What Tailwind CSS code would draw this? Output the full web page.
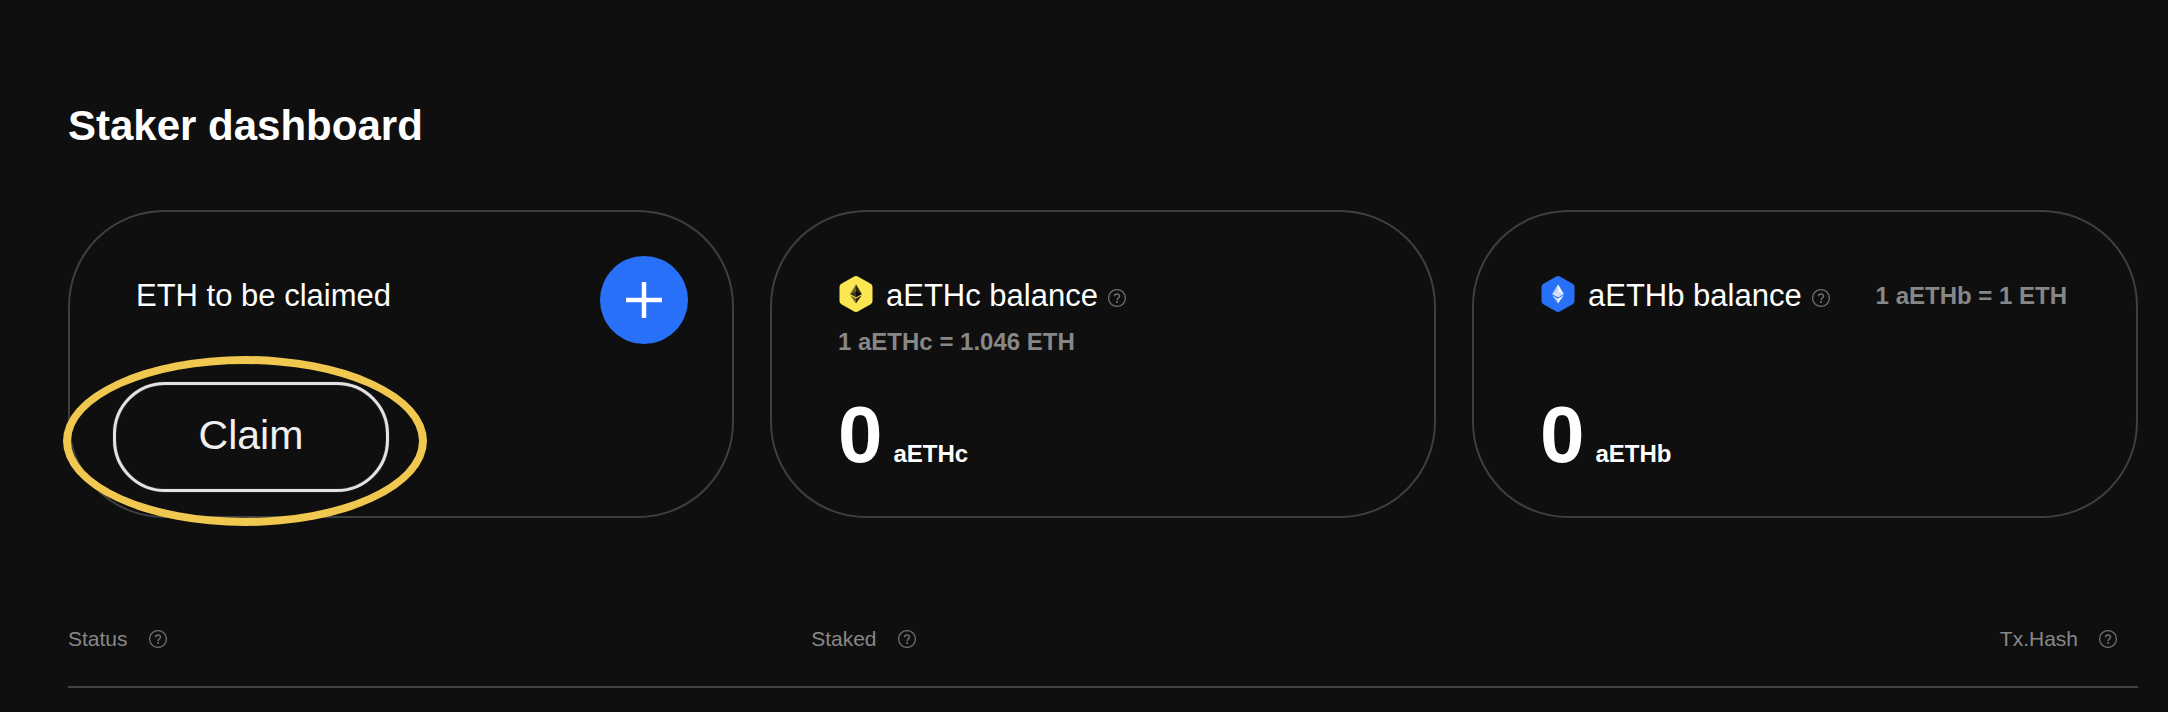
<!DOCTYPE html>
<html lang="en">
<head>
<meta charset="utf-8">
<meta name="viewport" content="width=device-width, initial-scale=1">
<title>Staker dashboard</title>
<script src="https://cdn.jsdelivr.net/npm/@tailwindcss/browser@4"></script>
</head>
<body class="min-h-screen bg-[#0f0f0f] font-['Liberation_Sans',Arial,sans-serif] text-white antialiased">
<svg class="hidden" aria-hidden="true">
  <symbol id="help" viewBox="0 0 18 18">
    <circle cx="9" cy="9" r="8.4" fill="none" stroke="currentColor" stroke-width="1.3"/>
    <path d="M6.500 7.300C6.500 5.800 7.500 4.900 9 4.900s2.500.9 2.500 2.200c0 1-.6 1.500-1.300 2-.8.600-1.100 1-1.100 2.100" fill="none" stroke="currentColor" stroke-width="1.500"/>
    <rect x="8.200" y="12.100" width="1.800" height="1.800" fill="currentColor"/>
  </symbol>
  <symbol id="hex" viewBox="0 0 36 36">
    <path d="M16.200.500a3.600 3.600 0 0 1 3.600 0l12.900 7.300a3.600 3.600 0 0 1 1.800 3.100v14.200a3.600 3.600 0 0 1-1.800 3.100l-12.900 7.300a3.600 3.600 0 0 1-3.600 0L3.300 28.200a3.600 3.600 0 0 1-1.800-3.100V10.900a3.600 3.600 0 0 1 1.800-3.100z" fill="currentColor"/>
  </symbol>
</svg>

<main class="pt-[102px] pr-[30px] pl-[68px]">
  <h1 class="text-[42px] leading-[48px] font-bold">Staker dashboard</h1>

  <div class="mt-[60px] grid grid-cols-3 gap-9">
    <section class="flex min-h-[308px] flex-col rounded-[96px] border-2 border-[#3f3f3f] pt-11">
      <div class="flex items-start justify-between pr-11 pl-[66px]">
        <h2 class="mt-5 text-[31px] leading-10">ETH to be claimed</h2>
        <button type="button" aria-label="Stake more" class="flex size-[88px] items-center justify-center rounded-full bg-[#2870f8]">
          <svg class="size-9" viewBox="0 0 36 36" aria-hidden="true"><path d="M18 0v36M0 18h36" stroke="#fff" stroke-width="4.500"/></svg>
        </button>
      </div>
      <div class="mt-[38px] pl-[43px]">
        <div class="relative h-[110px] w-[276px]">
          <button type="button" class="size-full rounded-[52px] border-[3px] border-[#e4e4e4] pb-1 text-[41px] leading-[48px] text-[#f0f0f0] shadow-[0_0_1px_#a0a0a0,inset_0_0_1px_#a0a0a0]">Claim</button>
          <div class="pointer-events-none absolute -top-[26px] -right-[38px] -bottom-[34px] -left-[50px] rounded-[50%] border-8 border-[#f1c84f]"></div>
        </div>
      </div>
    </section>

    <section class="flex min-h-[308px] flex-col rounded-[96px] border-2 border-[#3f3f3f] px-[66px] pt-16 pb-[41px]">
      <div class="flex items-start">
        <svg class="size-9 shrink-0" viewBox="0 0 36 36" aria-hidden="true">
          <use href="#hex" class="text-[#fce652]"/>
          <path d="M18 8.200v13.100l-5.800-3.400z" fill="#6e6424"/><path d="M18 8.200v13.100l5.800-3.400z" fill="#2b270e"/>
          <path d="M18 15.200v6.100l-5.800-3.400z" fill="#3e3814"/><path d="M18 15.200v6.100l5.800-3.400z" fill="#0f0f0f"/>
          <path d="M12.200 19.200l5.800 3.400v5z" fill="#6e6424"/><path d="M23.800 19.200L18 22.600v5z" fill="#2b270e"/>
        </svg>
        <h2 class="ml-3 text-[31px] leading-10">aETHc balance</h2>
        <button type="button" aria-label="About aETHc balance" class="mt-[13px] ml-[10px] text-[#6b6b6b]"><svg class="size-[18px]"><use href="#help"/></svg></button>
      </div>
      <p class="mt-3 text-2xl leading-7 font-bold text-[#878787]">1 aETHc = 1.046 ETH</p>
      <p class="mt-auto flex items-baseline gap-[11px] font-bold"><span class="text-[80px] leading-[80px]">0</span><span class="text-2xl leading-7">aETHc</span></p>
    </section>

    <section class="flex min-h-[308px] flex-col rounded-[96px] border-2 border-[#3f3f3f] px-[66px] pt-16 pb-[41px]">
      <div class="flex items-start">
        <svg class="size-9 shrink-0" viewBox="0 0 36 36" aria-hidden="true">
          <use href="#hex" class="text-[#2870f8]"/>
          <path d="M18 8.200v13.100l-5.800-3.400z" fill="#b8d0fd"/><path d="M18 8.200v13.100l5.800-3.400z" fill="#f3f7ff"/>
          <path d="M18 15.200v6.100l-5.800-3.400z" fill="#d6e3fe"/><path d="M18 15.200v6.100l5.800-3.400z" fill="#c9dafd"/>
          <path d="M12.200 19.200l5.800 3.400v5z" fill="#b8d0fd"/><path d="M23.800 19.200L18 22.600v5z" fill="#f3f7ff"/>
        </svg>
        <h2 class="ml-3 text-[31px] leading-10">aETHb balance</h2>
        <button type="button" aria-label="About aETHb balance" class="mt-[13px] ml-[10px] text-[#6b6b6b]"><svg class="size-[18px]"><use href="#help"/></svg></button>
        <p class="mt-[6px] mr-[3px] ml-auto text-2xl leading-7 font-bold text-[#878787]">1 aETHb = 1 ETH</p>
      </div>
      <p class="mt-auto flex items-baseline gap-[11px] font-bold"><span class="text-[80px] leading-[80px]">0</span><span class="text-2xl leading-7">aETHb</span></p>
    </section>
  </div>

  <table class="mt-[109px] w-full table-fixed border-collapse text-left text-[21px] leading-6 text-[#878787]">
    <thead>
      <tr class="border-b-2 border-[#434343]">
        <th scope="col" class="w-[35.9%] p-0 pb-[35px] font-normal"><div class="flex items-center gap-[21px]">Status <button type="button" aria-label="About status" class="text-[#6b6b6b]"><svg class="size-[18px]"><use href="#help"/></svg></button></div></th>
        <th scope="col" class="p-0 pb-[35px] font-normal"><div class="flex items-center gap-[21px]">Staked <button type="button" aria-label="About staked" class="text-[#6b6b6b]"><svg class="size-[18px]"><use href="#help"/></svg></button></div></th>
        <th scope="col" class="p-0 pr-[21px] pb-[35px] font-normal"><div class="flex items-center justify-end gap-[21px]">Tx.Hash <button type="button" aria-label="About transaction hash" class="text-[#6b6b6b]"><svg class="size-[18px]"><use href="#help"/></svg></button></div></th>
      </tr>
    </thead>
  </table>
</main>
</body>
</html>
